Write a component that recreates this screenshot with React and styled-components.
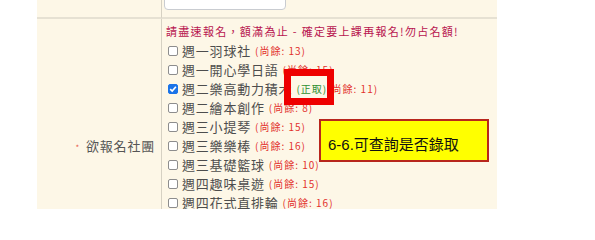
import styled, { createGlobalStyle } from "styled-components";

const GlobalStyle = createGlobalStyle`
  body {
    margin: 0;
    background: #ffffff;
    font-family: "Liberation Sans", "Noto Sans CJK TC", sans-serif;
  }
`;

const Page = styled.div`
  width: 595px;
  height: 223px;
  position: relative;
  overflow: hidden;
`;

const Frame = styled.div`
  margin-left: 37px;
  width: 460px;
  height: 209px;
  overflow: hidden;
  background: #fdf7e7;
  display: grid;
  grid-template-columns: 124px 1fr;
  grid-template-rows: 19px 1fr;
`;

const TopCell = styled.div`
  border-bottom: 2px solid #e6e1d3;
  box-sizing: border-box;
  overflow: hidden;
  position: relative;
  border-left: ${(p) => (p.$divider ? "1px solid #d6d1c3" : "none")};
`;

const InputStub = styled.div`
  position: absolute;
  left: 2px;
  bottom: 7px;
  width: 122px;
  height: 26px;
  background: #ffffff;
  border: 1px solid #c9ccd1;
  border-radius: 4px;
  box-sizing: border-box;
`;

const LabelCell = styled.div`
  padding: 117px 6px 0 0;
  text-align: right;
  line-height: 19px;
  font-family: "Noto Sans CJK TC", sans-serif;
  font-size: 13px;
  letter-spacing: 0.8px;
  color: #555555;
  white-space: nowrap;
`;

const Star = styled.span`
  font-size: 8px;
  color: #e8574c;
  margin-right: 6px;
  vertical-align: middle;
`;

const ListCell = styled.div`
  border-left: 1px solid #d6d1c3;
  padding: 3px 0 0 4px;
  font-family: "Noto Sans CJK TC", sans-serif;
`;

const Notice = styled.div`
  line-height: 19px;
  font-size: 11px;
  letter-spacing: 1.3px;
  color: #b8154f;
  white-space: nowrap;
`;

const Item = styled.div`
  display: flex;
  align-items: center;
  height: 19px;
  white-space: nowrap;
`;

const Box = styled.span`
  width: 10px;
  height: 10px;
  margin: 0 4px 0 2px;
  box-sizing: border-box;
  border-radius: 2px;
  border: 1px solid ${(p) => (p.$checked ? "#1a73e8" : "#8d8d8d")};
  background: ${(p) => (p.$checked ? "#1a73e8" : "#ffffff")};
  display: flex;
  align-items: center;
  justify-content: center;
  flex: none;
`;

const Name = styled.span`
  font-size: 13px;
  letter-spacing: 0.8px;
  color: #4d4d4d;
`;

const Tag = styled.span`
  font-size: 10px;
  letter-spacing: 1px;
  color: ${(p) => (p.$ok ? "#2f8f2f" : "#e2302c")};
  margin-left: ${(p) => (p.$tight ? "0" : "4px")};
`;

const Highlight = styled.div`
  position: absolute;
  left: 284px;
  top: 69px;
  width: 50px;
  height: 36px;
  box-sizing: border-box;
  border: 7px solid #ee0000;
`;

const Callout = styled.div`
  position: absolute;
  left: 319px;
  top: 119px;
  width: 170px;
  height: 43px;
  box-sizing: border-box;
  background: #ffff00;
  border: 2px solid #b8261c;
  display: flex;
  align-items: center;
  padding: 6px 0 0 7px;
  font-family: "Liberation Sans", "Noto Sans CJK TC", sans-serif;
  font-size: 15px;
  color: #111111;
`;

const clubs = [
  { name: "週一羽球社", left: 13 },
  { name: "週一開心學日語", left: 15 },
  { name: "週二樂高動力積木", left: 11, checked: true },
  { name: "週二繪本創作", left: 8 },
  { name: "週三小提琴", left: 15 },
  { name: "週三樂樂棒", left: 16 },
  { name: "週三基礎籃球", left: 10 },
  { name: "週四趣味桌遊", left: 15 },
  { name: "週四花式直排輪", left: 16 },
];

const Check = () => (
  <svg width="8" height="8" viewBox="0 0 8 8">
    <path d="M1.2 4.2 L3.2 6.1 L6.9 1.8" fill="none" stroke="#fff" strokeWidth="1.6" />
  </svg>
);

export default function App() {
  return (
    <>
      <GlobalStyle />
      <Page>
        <Frame>
          <TopCell />
          <TopCell $divider>
            <InputStub />
          </TopCell>
          <LabelCell>
            <Star>*</Star>欲報名社團
          </LabelCell>
          <ListCell>
            <Notice>請盡速報名，額滿為止 - 確定要上課再報名!勿占名額!</Notice>
            {clubs.map((c) => (
              <Item key={c.name}>
                <Box $checked={c.checked}>{c.checked && <Check />}</Box>
                <Name>{c.name}</Name>
                {c.checked && <Tag $ok>(正取)</Tag>}
                <Tag $tight={c.checked}>(尚餘: {c.left})</Tag>
              </Item>
            ))}
          </ListCell>
        </Frame>
        <Highlight />
        <Callout>6-6.可查詢是否錄取</Callout>
      </Page>
    </>
  );
}
